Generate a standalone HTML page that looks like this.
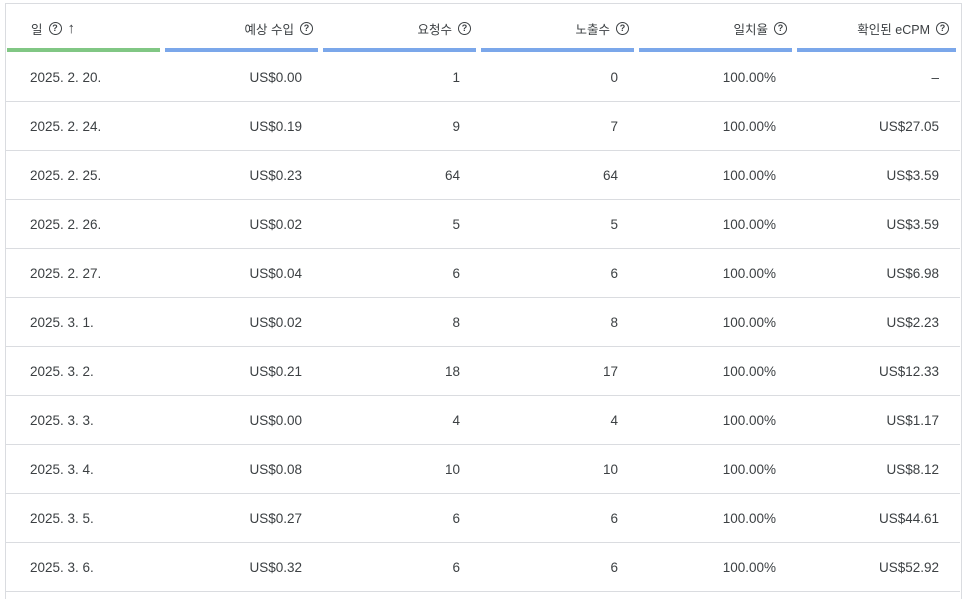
<!DOCTYPE html>
<html style="height:599px;overflow:hidden"><head><meta charset="utf-8"><style>
body{margin:0;width:969px;height:599px;overflow:hidden;background:#fff;font-family:"Liberation Sans","Noto Sans CJK KR",sans-serif;color:#3c4043;position:relative}
.t{position:absolute;left:5px;top:3px;width:955px;height:596px;border-left:1px solid #dadce0;border-right:1px solid #dadce0;border-top:1px solid #dadce0}
.h{position:absolute;top:0;height:48px;font-size:12.5px;color:#3c4043}
.h span{position:absolute;top:15px;right:10px;white-space:nowrap;display:flex;align-items:center;gap:6px}
.bar{position:absolute;bottom:0;left:0;right:5px;height:4px;background:#7ba7ea}
.q{display:inline-block;box-sizing:border-box;width:13px;height:13px;border:1.2px solid #3c4043;border-radius:50%;font-size:9px;line-height:11px;text-align:center;font-style:normal;font-weight:bold}
.r{position:absolute;left:0;width:955px;height:48px;border-bottom:1px solid #dadce0;font-size:13.5px}
.r div{position:absolute;top:17px;text-align:right;width:140px}
</style></head><body>
<div class="t">
<div class="h" style="left:1px;width:158px"><span style="left:24px;right:auto">일 <i class="q">?</i> <b style="font-weight:normal;font-size:15px">↑</b></span><div class="bar" style="background:#81c784"></div></div>
<div class="h" style="left:159px;width:158px"><span>예상 수입 <i class="q">?</i></span><div class="bar"></div></div>
<div class="h" style="left:317px;width:158px"><span>요청수 <i class="q">?</i></span><div class="bar"></div></div>
<div class="h" style="left:475px;width:158px"><span>노출수 <i class="q">?</i></span><div class="bar"></div></div>
<div class="h" style="left:633px;width:158px"><span>일치율 <i class="q">?</i></span><div class="bar"></div></div>
<div class="h" style="left:791px;width:164px"><span style="right:12px">확인된 eCPM <i class="q">?</i></span><div class="bar"></div></div>
</div>
<div style="position:absolute;left:5px;top:53px">
<div class="r" style="top:0"><div style="left:25px;text-align:left">2025. 2. 20.</div><div style="left:157px">US$0.00</div><div style="left:315px">1</div><div style="left:473px">0</div><div style="left:631px">100.00%</div><div style="left:794px">–</div></div>
<div class="r" style="top:49px"><div style="left:25px;text-align:left">2025. 2. 24.</div><div style="left:157px">US$0.19</div><div style="left:315px">9</div><div style="left:473px">7</div><div style="left:631px">100.00%</div><div style="left:794px">US$27.05</div></div>
<div class="r" style="top:98px"><div style="left:25px;text-align:left">2025. 2. 25.</div><div style="left:157px">US$0.23</div><div style="left:315px">64</div><div style="left:473px">64</div><div style="left:631px">100.00%</div><div style="left:794px">US$3.59</div></div>
<div class="r" style="top:147px"><div style="left:25px;text-align:left">2025. 2. 26.</div><div style="left:157px">US$0.02</div><div style="left:315px">5</div><div style="left:473px">5</div><div style="left:631px">100.00%</div><div style="left:794px">US$3.59</div></div>
<div class="r" style="top:196px"><div style="left:25px;text-align:left">2025. 2. 27.</div><div style="left:157px">US$0.04</div><div style="left:315px">6</div><div style="left:473px">6</div><div style="left:631px">100.00%</div><div style="left:794px">US$6.98</div></div>
<div class="r" style="top:245px"><div style="left:25px;text-align:left">2025. 3. 1.</div><div style="left:157px">US$0.02</div><div style="left:315px">8</div><div style="left:473px">8</div><div style="left:631px">100.00%</div><div style="left:794px">US$2.23</div></div>
<div class="r" style="top:294px"><div style="left:25px;text-align:left">2025. 3. 2.</div><div style="left:157px">US$0.21</div><div style="left:315px">18</div><div style="left:473px">17</div><div style="left:631px">100.00%</div><div style="left:794px">US$12.33</div></div>
<div class="r" style="top:343px"><div style="left:25px;text-align:left">2025. 3. 3.</div><div style="left:157px">US$0.00</div><div style="left:315px">4</div><div style="left:473px">4</div><div style="left:631px">100.00%</div><div style="left:794px">US$1.17</div></div>
<div class="r" style="top:392px"><div style="left:25px;text-align:left">2025. 3. 4.</div><div style="left:157px">US$0.08</div><div style="left:315px">10</div><div style="left:473px">10</div><div style="left:631px">100.00%</div><div style="left:794px">US$8.12</div></div>
<div class="r" style="top:441px"><div style="left:25px;text-align:left">2025. 3. 5.</div><div style="left:157px">US$0.27</div><div style="left:315px">6</div><div style="left:473px">6</div><div style="left:631px">100.00%</div><div style="left:794px">US$44.61</div></div>
<div class="r" style="top:490px"><div style="left:25px;text-align:left">2025. 3. 6.</div><div style="left:157px">US$0.32</div><div style="left:315px">6</div><div style="left:473px">6</div><div style="left:631px">100.00%</div><div style="left:794px">US$52.92</div></div>
</div>
</body></html>
